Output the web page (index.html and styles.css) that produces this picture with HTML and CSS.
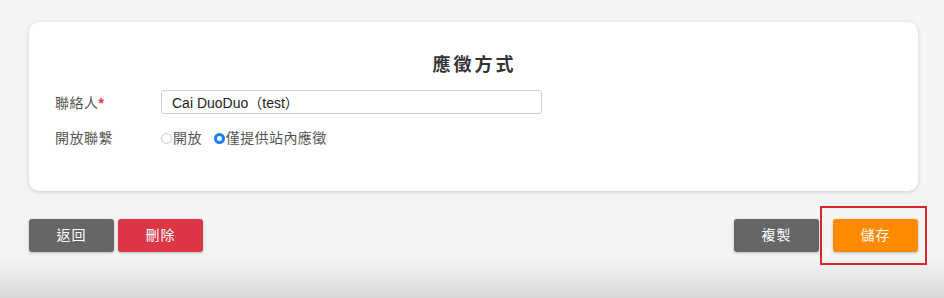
FILE: index.html
```html
<!DOCTYPE html>
<html lang="zh-Hant">
<head>
    <meta charset="UTF-8">
    <title>應徵方式</title>
    <link rel="stylesheet" href="styles.css">
</head>
<body>

<div class="page">
    <div class="card">
        <h2 class="card-title">應徵方式</h2>

        <div class="form-row">
            <label class="form-label">聯絡人<span class="req">*</span></label>
            <input class="form-input" type="text" value="Cai DuoDuo（test）">
        </div>

        <div class="form-row">
            <label class="form-label">開放聯繫</label>
            <div class="radio-group">
                <span class="radio-item"><span class="radio"></span>開放</span>
                <span class="radio-item"><span class="radio checked"></span>僅提供站內應徵</span>
            </div>
        </div>
    </div>

    <div class="actions">
        <div class="actions-left">
            <a class="btn btn-gray" href="javascript:;">返回</a>
            <a class="btn btn-red" href="javascript:;">刪除</a>
        </div>
        <div class="actions-right">
            <a class="btn btn-gray" href="javascript:;">複製</a>
            <a class="btn btn-orange btn-marked" href="javascript:;">儲存</a>
        </div>
    </div>
</div>

</body>
</html>
```

FILE: styles.css
```css
*{
    margin: 0;
    padding: 0;
    box-sizing: border-box;
}

html, body{
    height: 100%;
}

body{
    font-family: "Liberation Sans", "Noto Sans CJK TC", sans-serif;
    font-size: 14px;
    color: #555;
    /*底部的陰影漸層*/
    background: linear-gradient(to bottom, #f4f4f4 0, #f4f4f4 258px, #d8d8d8 298px);
}

.page{
    padding: 22px 26px 0 29px;
}

.card{
    width: 889px;
    height: 169px;
    background-color: #fff;
    border-radius: 10px;
    box-shadow: 0 1px 4px rgba(0, 0, 0, 0.16);
    padding: 31px 26px 0 26px;
}

.card-title{
    text-align: center;
    font-size: 18px;
    line-height: 24px;
    font-weight: bold;
    letter-spacing: 3px;
    color: #333;
    padding-left: 2px;
    margin-bottom: 13px;
}

.form-row{
    display: flex;
    align-items: center;
    height: 24px;
    margin-bottom: 11px;
}

.form-label{
    width: 106px;
    flex-shrink: 0;
    color: #555;
    letter-spacing: 0.5px;
}

.req{
    color: #dc3545;
    font-weight: bold;
}

.form-input{
    width: 381px;
    height: 24px;
    border: 1px solid #ccd0d5;
    border-radius: 3px;
    padding: 0 10px;
    font-family: inherit;
    font-size: 14px;
    color: #222;
    outline: none;
}

.radio-group{
    display: flex;
    align-items: center;
    gap: 12px;
    color: #555;
    letter-spacing: 0.4px;
}

.radio-item{
    display: flex;
    align-items: center;
}

.radio{
    width: 11px;
    height: 11px;
    border-radius: 50%;
    border: 1px solid #c8c8c8;
    background-color: #fff;
    margin-right: 1px;
    margin-top: 2px;
}

.radio.checked{
    border: 3px solid #1a7cf5;
    background-color: #fff;
}

.actions{
    display: flex;
    justify-content: space-between;
    margin-top: 28px;
    width: 889px;
}

.actions-left, .actions-right{
    display: flex;
}

.actions-left{
    gap: 4px;
}

.actions-right{
    gap: 14px;
}

.btn{
    display: block;
    width: 85px;
    height: 33px;
    line-height: 33px;
    text-align: center;
    color: #fff;
    text-decoration: none;
    font-size: 14px;
    letter-spacing: 1px;
    border-radius: 3px;
    box-shadow: 0 1px 3px rgba(0, 0, 0, 0.25);
}

.btn-gray{
    background-color: #666;
}

.btn-red{
    background-color: #dc3545;
}

.btn-orange{
    background-color: #ff8a00;
}

/*標記框*/
.btn-marked{
    position: relative;
}

.btn-marked::after{
    content: "";
    position: absolute;
    left: -13px;
    top: -13px;
    right: -9px;
    bottom: -13px;
    border: 2px solid #d8262b;
}
```
